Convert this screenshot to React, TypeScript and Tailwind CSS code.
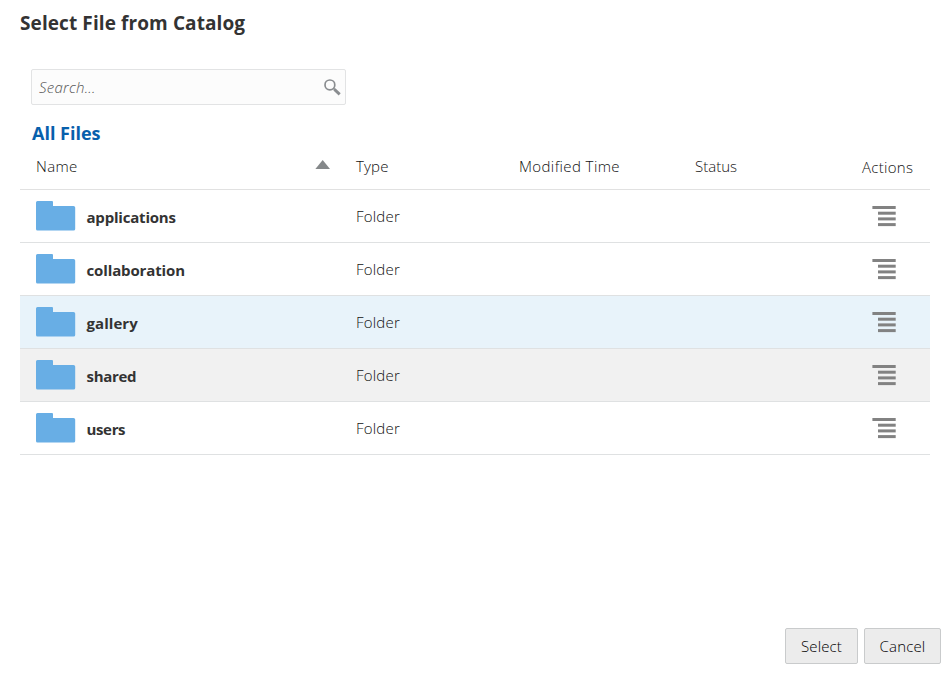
const font = "font-['Open_Sans','Noto_Sans',sans-serif]";

const columns = "grid grid-cols-[320px_163px_176px_167px_84px] pl-4";

const rows = [
  { name: 'applications', bg: 'bg-white', tracking: 'tracking-[-0.2px]' },
  { name: 'collaboration', bg: 'bg-white', tracking: 'tracking-[-0.13px]' },
  { name: 'gallery', bg: 'bg-[#e8f3fa]', tracking: 'tracking-[0.05px]' },
  { name: 'shared', bg: 'bg-[#f1f1f1]', tracking: 'tracking-[-0.3px]' },
  { name: 'users', bg: 'bg-white', tracking: 'tracking-[-0.35px]' },
];

function FolderIcon() {
  return (
    <svg className="block h-[30px] w-10 shrink-0" viewBox="0 0 40 30" fill="#68aee5">
      <path d="M1.5 0H16Q17 0 17 1V5H37.5Q39.2 5 39.2 6.5V28Q39.2 29.5 37.5 29.5H1.5Q0 29.5 0 28V1.5Q0 0 1.5 0Z" />
    </svg>
  );
}

function ActionsIcon() {
  return (
    <svg className="block h-[21px] w-6" viewBox="0 0 24 21" fill="#828282">
      <rect x="0.4" y="0" width="23.3" height="3" />
      <rect x="6" y="5.7" width="17.7" height="3" />
      <rect x="6" y="11.4" width="17.7" height="3" />
      <rect x="6" y="17.1" width="17.7" height="3" />
    </svg>
  );
}

export default function App() {
  return (
    <div className={`flex h-[673px] w-[950px] flex-col overflow-hidden bg-white text-[#333] ${font}`}>
      <h1 className="h-[69px] pl-5 pt-[9px] text-[19px] leading-7 font-bold tracking-[0.1px]"><span>Select File from Catalog</span></h1>

      <div className="ml-[31px] flex h-9 w-[315px] items-center justify-between rounded-[2px] border border-[#e2e3e4] bg-[#fcfcfc] pl-[7px] pr-1">
        <span className="text-[15px] font-light tracking-[0.25px] text-[#555] italic">Search...</span>
        <svg className="block h-[18px] w-[18px]" viewBox="0 0 18 18" fill="none" stroke="#8a8d90">
          <circle cx="6.9" cy="6.9" r="4.9" strokeWidth="1.7" />
          <path d="M10.2 10.2L11.9 11.7" strokeWidth="1.6" />
          <path d="M11.4 11.4L16.7 16.4" strokeWidth="2.9" />
        </svg>
      </div>

      <h2 className="mt-[14px] ml-8 h-7 text-[18px] leading-7 font-bold text-[#0760ac]"><span>All Files</span></h2>

      <div className="mx-5">
        <div className={`${columns} h-[43px] border-b border-[#e1e1e1] pt-[9px] text-[15px] leading-5 font-light text-[#111]`}>
          <div className="flex justify-between">
            <span className="tracking-[0.35px]">Name</span>
            <svg className="mt-1 mr-[26px] block h-[9px] w-[15px]" viewBox="0 0 15 9" fill="#85888a">
              <path d="M7.7 0L15 9H0.4Z" />
            </svg>
          </div>
          <div><span className="tracking-[0.15px]">Type</span></div>
          <div><span className="tracking-[0.4px]">Modified Time</span></div>
          <div><span>Status</span></div>
          <div className="pt-px"><span className="tracking-[0.3px]">Actions</span></div>
        </div>
        {rows.map((row) => (
          <div key={row.name} className={`${columns} h-[53px] border-b border-[#dfe1e2] ${row.bg}`}>
            <div className="flex items-start pt-[11px]">
              <FolderIcon />
              <span className={`ml-[10.5px] pt-[6px] text-[15px] leading-5 font-bold ${row.tracking}`}>{row.name}</span>
            </div>
            <div className="pt-4 text-[15px] leading-5 font-light text-[#111]"><span className="tracking-[0.2px]">Folder</span></div>
            <div />
            <div />
            <div className="pt-4 pl-[10px]"><ActionsIcon /></div>
          </div>
        ))}
      </div>

      <div className="mt-auto mr-[9px] mb-[9px] flex justify-end gap-[6px] text-[15px] font-light tracking-[0.15px] text-black">
        <button className="h-9 w-[73px] rounded-[2px] border border-[#c9cbcc] bg-[#ececec]">Select</button>
        <button className="h-9 w-[77px] rounded-[2px] border border-[#c9cbcc] bg-[#ececec]">Cancel</button>
      </div>
    </div>
  );
}
